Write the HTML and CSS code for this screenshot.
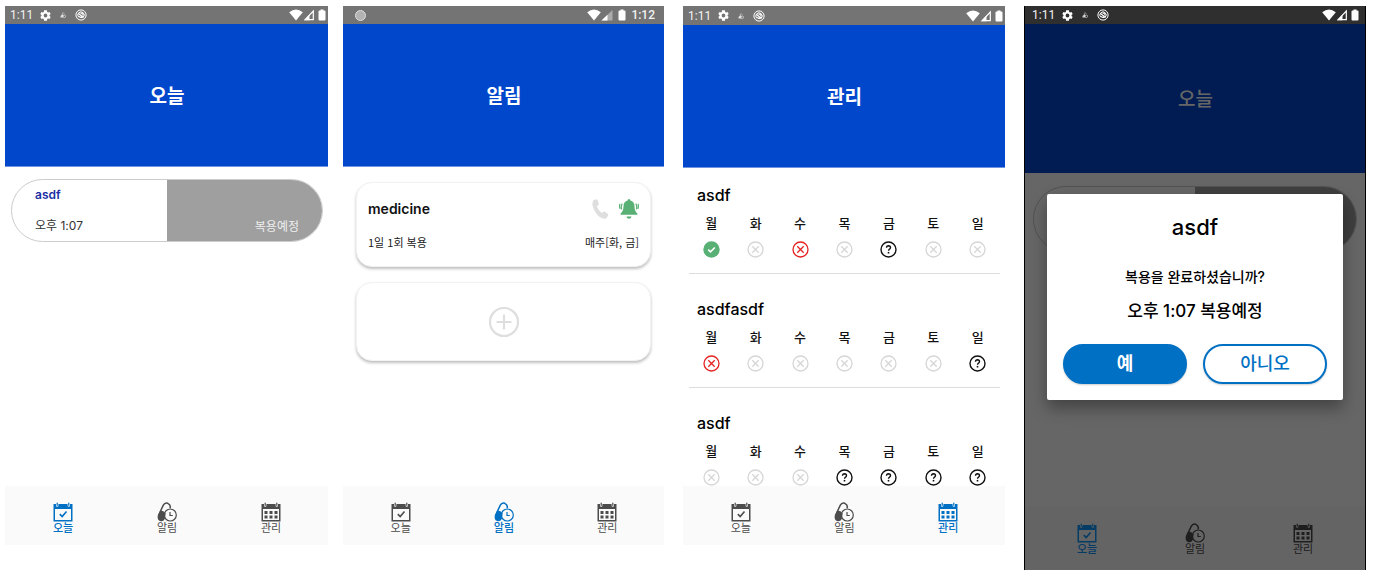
FILE: index.html
```html
<!DOCTYPE html>
<html lang="ko">
<head>
<meta charset="utf-8">
<meta name="viewport" content="width=device-width, initial-scale=1">
<title>복용 알림</title>
<link rel="stylesheet" href="styles.css">
</head>
<body>
<svg class="sprite" aria-hidden="true">
  <symbol id="gear" viewBox="0 0 24 24"><path fill="currentColor" fill-rule="evenodd" d="M19.4 13a7.500 7.500 0 0 0 0-2l2.200-1.700-2.200-3.800-2.600 1a7.500 7.500 0 0 0-1.700-1L14.700 2.500H9.300L8.900 5.500a7.500 7.500 0 0 0-1.700 1l-2.600-1-2.200 3.800L4.600 11a7.500 7.500 0 0 0 0 2l-2.200 1.700 2.200 3.800 2.600-1a7.500 7.500 0 0 0 1.700 1l.4 3h5.400l.4-3a7.500 7.500 0 0 0 1.700-1l2.600 1 2.200-3.800zM12 15.500a3.500 3.500 0 1 1 0-7 3.500 3.500 0 0 1 0 7z"/></symbol>
  <symbol id="pillmini" viewBox="0 0 8 8"><path fill="currentColor" opacity=".75" d="M1.500 6.500V5l2-2 .8 1v2.500z"/><path fill="none" stroke="currentColor" stroke-width=".7" opacity=".6" d="M3 3l1-1.500L5.500 3"/><circle cx="5.300" cy="5.300" r="1.300" fill="none" stroke="currentColor" stroke-width=".7" opacity=".7"/></symbol>
  <symbol id="swirl" viewBox="0 0 24 24"><g fill="none" stroke="currentColor"><circle cx="12" cy="12" r="10.200" stroke-width="2"/><path stroke-width="2" d="M7.500 16.500a6.300 6.300 0 1 1 9 0"/><path stroke-width="2.200" d="M7 9l10 8M8.500 14.500a4.500 4.500 0 0 0 6.500 1.500M11 8.500a4 4 0 0 1 5 4.500"/></g></symbol>
  <symbol id="wifi" viewBox="0 0 14 12"><path fill="currentColor" d="M7 11.500L.2 3.200Q7-2 13.800 3.200z"/></symbol>
  <symbol id="signal" viewBox="0 0 12 12"><path fill="none" stroke="currentColor" stroke-width="1.200" d="M2.200 10.600L10.300 2v8.600z"/><path fill="currentColor" d="M1 11.300L6.500 5.500v5.800z"/></symbol>
  <symbol id="signalpart" viewBox="0 0 12 12"><path fill="currentColor" opacity=".4" d="M.5 11.500L11.500 1v10.500z"/><path fill="currentColor" d="M.5 11.500L6.500 5.800v5.700z"/></symbol>
  <symbol id="battery" viewBox="0 0 8 12"><path fill="currentColor" d="M2.500.5h3v1h1q1 0 1 1v8q0 1-1 1h-5q-1 0-1-1v-8q0-1 1-1h1z"/></symbol>
  <symbol id="today" viewBox="0 0 20 20"><path fill="currentColor" fill-rule="evenodd" d="M.5 2H3v1.500a1.200 1.200 0 0 0 2.400 0V2h9.200v1.500a1.200 1.200 0 0 0 2.400 0V2h2.500v17.500H.5zM2 7v11h16V7z"/><path stroke="currentColor" stroke-width="1.200" stroke-linecap="round" d="M4.200 1v2.300M15.800 1v2.300"/><path fill="none" stroke="currentColor" stroke-width="1.600" d="M6.800 12.200l2.400 2.300 4.300-5"/></symbol>
  <symbol id="pill" viewBox="0 0 20 20"><path fill="currentColor" d="M3.200 8.500Q6.200 8 8.700 11.500L7.800 17Q6 20.200 3 19 .2 17.800.7 14.500z"/><path fill="none" stroke="currentColor" stroke-width="1.500" d="M1.200 14L6.300 3.200Q8 .2 10.800 1.300 14.200 3 13 6.300"/><circle cx="13.300" cy="13" r="6" fill="none" stroke="currentColor" stroke-width="1.200"/><path fill="none" stroke="currentColor" stroke-width="1.200" d="M13 10v3.500h2.800"/></symbol>
  <symbol id="calendar" viewBox="0 0 20 20"><path fill="currentColor" fill-rule="evenodd" d="M.5 2H3v1.500a1.200 1.200 0 0 0 2.400 0V2h9.200v1.500a1.200 1.200 0 0 0 2.400 0V2h2.500v17.500H.5zM2 7v11h16V7z"/><path stroke="currentColor" stroke-width="1.200" stroke-linecap="round" d="M4.200 1v2.300M15.800 1v2.300"/><path fill="currentColor" d="M3.500 9h3v3h-3zM8.500 9h3v3h-3zM13.500 9h3v3h-3zM3.500 13.500h3v3h-3zM8.500 13.500h3v3h-3zM13.500 13.500h3v3h-3z"/></symbol>
  <symbol id="phone" viewBox="0 0 20 20"><path fill="currentColor" d="M4.200.9L6.500.2q.8-.1 1.100.7l1.200 3.700q.2.800-.4 1.300L6.800 7.200Q8.300 11.400 11.800 14l2-1.300q.7-.4 1.300 0l2.900 2.300q.6.600.2 1.300l-1.400 2.400q-.7 1-2 1.100Q9.500 19.700 5.300 13 1.500 7 2.700 2.500q.3-1.200 1.500-1.600z"/></symbol>
  <symbol id="bell" viewBox="0 0 20 20"><path fill="currentColor" d="M10 0q1.400 0 1.400 1.600 4 1 4.100 5.600 0 4.800 2.900 7.300v1.300H1.600v-1.300q2.900-2.500 2.900-7.300Q4.600 2.600 8.600 1.600 8.600 0 10 0zM7.500 17.500h5q-.4 2.200-2.500 2.200t-2.500-2.200z"/><path fill="none" stroke="currentColor" stroke-width="1.200" stroke-linecap="round" d="M3 5Q1.800 7.500 2.500 10M.9 5.200q-.6 2 0 4.200M17 5q1.200 2.500.5 5M19.100 5.200q.6 2 0 4.200"/></symbol>
  <symbol id="plus" viewBox="0 0 32 32"><circle cx="16" cy="16" r="14" fill="none" stroke="currentColor" stroke-width="2.200"/><path stroke="currentColor" stroke-width="2.200" d="M8.500 16h15M16 8.500v15"/></symbol>
  <symbol id="miss" viewBox="0 0 17 17"><g fill="none" stroke="currentColor" stroke-width="1.300"><circle cx="8.500" cy="8.500" r="7.500"/><path d="M5.300 5.300l6.400 6.400M11.700 5.300l-6.400 6.400"/></g></symbol>
  <symbol id="done" viewBox="0 0 17 17"><circle cx="8.500" cy="8.500" r="8.200" fill="currentColor"/><path fill="none" stroke="#fff" stroke-width="1.700" d="M5.200 8.600l2.300 2.200 4.300-4.300"/></symbol>
  <symbol id="ask" viewBox="0 0 17 17"><g fill="none" stroke="currentColor" stroke-width="1.400"><circle cx="8.500" cy="8.500" r="7.500"/><path d="M6.500 6.700q.1-1.900 2-1.900 2 .1 2 1.800 0 1-1 1.600-.9.500-1 1.600"/><path stroke-width="1.600" d="M8.500 10.900v1.600"/></g></symbol>
</svg>

<main class="gallery">
  <section class="phone phone-today">
    <div class="status">
      <span class="clock">1:11</span><svg class="s-gear"><use href="#gear"/></svg><svg class="s-mini"><use href="#pillmini"/></svg><svg class="s-swirl"><use href="#swirl"/></svg>
      <span class="status-right"><svg class="s-wifi"><use href="#wifi"/></svg><svg class="s-signal"><use href="#signal"/></svg><svg class="s-battery"><use href="#battery"/></svg></span>
    </div>
    <header class="hero"><h1>오늘</h1></header>
    <div class="body">
      <article class="dose">
        <div class="dose-info"><h2>asdf</h2><p>오후 1:07</p></div>
        <div class="dose-state">복용예정</div>
      </article>
    </div>
    <nav class="tabs">
      <a class="active" href="#"><svg><use href="#today"/></svg>오늘</a>
      <a href="#"><svg><use href="#pill"/></svg>알림</a>
      <a href="#"><svg><use href="#calendar"/></svg>관리</a>
    </nav>
  </section>

  <section class="phone phone-alarm">
    <div class="status">
      <span class="record"></span>
      <span class="status-right"><svg class="s-wifi"><use href="#wifi"/></svg><svg class="s-signal"><use href="#signalpart"/></svg><svg class="s-battery"><use href="#battery"/></svg><span class="clock strong">1:12</span></span>
    </div>
    <header class="hero"><h1>알림</h1></header>
    <div class="body alarms">
      <article class="card alarm">
        <div class="row">
          <h2>medicine</h2>
          <div class="actions">
            <button type="button" class="icon-btn" aria-label="전화"><svg><use href="#phone"/></svg></button>
            <button type="button" class="icon-btn on" aria-label="알림 켜짐"><svg><use href="#bell"/></svg></button>
          </div>
        </div>
        <div class="row small"><span>1일 1회 복용</span><span>매주[화, 금]</span></div>
      </article>
      <button type="button" class="card add" aria-label="추가"><svg><use href="#plus"/></svg></button>
    </div>
    <nav class="tabs">
      <a href="#"><svg><use href="#today"/></svg>오늘</a>
      <a class="active" href="#"><svg><use href="#pill"/></svg>알림</a>
      <a href="#"><svg><use href="#calendar"/></svg>관리</a>
    </nav>
  </section>

  <section class="phone phone-manage">
    <div class="status">
      <span class="clock">1:11</span><svg class="s-gear"><use href="#gear"/></svg><svg class="s-mini"><use href="#pillmini"/></svg><svg class="s-swirl"><use href="#swirl"/></svg>
      <span class="status-right"><svg class="s-wifi"><use href="#wifi"/></svg><svg class="s-signal"><use href="#signal"/></svg><svg class="s-battery"><use href="#battery"/></svg></span>
    </div>
    <header class="hero"><h1>관리</h1></header>
    <div class="body weeks">
      <table class="week">
        <caption>asdf</caption>
        <thead><tr><th>월</th><th>화</th><th>수</th><th>목</th><th>금</th><th>토</th><th>일</th></tr></thead>
        <tbody><tr><td class="done"><svg><use href="#done"/></svg></td><td><svg><use href="#miss"/></svg></td><td class="missed"><svg><use href="#miss"/></svg></td><td><svg><use href="#miss"/></svg></td><td class="ask"><svg><use href="#ask"/></svg></td><td><svg><use href="#miss"/></svg></td><td><svg><use href="#miss"/></svg></td></tr></tbody>
      </table>
      <table class="week">
        <caption>asdfasdf</caption>
        <thead><tr><th>월</th><th>화</th><th>수</th><th>목</th><th>금</th><th>토</th><th>일</th></tr></thead>
        <tbody><tr><td class="missed"><svg><use href="#miss"/></svg></td><td><svg><use href="#miss"/></svg></td><td><svg><use href="#miss"/></svg></td><td><svg><use href="#miss"/></svg></td><td><svg><use href="#miss"/></svg></td><td><svg><use href="#miss"/></svg></td><td class="ask"><svg><use href="#ask"/></svg></td></tr></tbody>
      </table>
      <table class="week">
        <caption>asdf</caption>
        <thead><tr><th>월</th><th>화</th><th>수</th><th>목</th><th>금</th><th>토</th><th>일</th></tr></thead>
        <tbody><tr><td><svg><use href="#miss"/></svg></td><td><svg><use href="#miss"/></svg></td><td><svg><use href="#miss"/></svg></td><td class="ask"><svg><use href="#ask"/></svg></td><td class="ask"><svg><use href="#ask"/></svg></td><td class="ask"><svg><use href="#ask"/></svg></td><td class="ask"><svg><use href="#ask"/></svg></td></tr></tbody>
      </table>
    </div>
    <nav class="tabs">
      <a href="#"><svg><use href="#today"/></svg>오늘</a>
      <a href="#"><svg><use href="#pill"/></svg>알림</a>
      <a class="active" href="#"><svg><use href="#calendar"/></svg>관리</a>
    </nav>
  </section>

  <section class="phone phone-dialog">
    <div class="status">
      <span class="clock">1:11</span><svg class="s-gear"><use href="#gear"/></svg><svg class="s-mini"><use href="#pillmini"/></svg><svg class="s-swirl"><use href="#swirl"/></svg>
      <span class="status-right"><svg class="s-wifi"><use href="#wifi"/></svg><svg class="s-signal"><use href="#signal"/></svg><svg class="s-battery"><use href="#battery"/></svg></span>
    </div>
    <div class="screen">
      <header class="hero"><h1>오늘</h1></header>
      <div class="body">
        <article class="dose">
          <div class="dose-info"></div>
          <div class="dose-state"></div>
        </article>
      </div>
      <nav class="tabs">
        <a class="active" href="#"><svg><use href="#today"/></svg>오늘</a>
        <a href="#"><svg><use href="#pill"/></svg>알림</a>
        <a href="#"><svg><use href="#calendar"/></svg>관리</a>
      </nav>
      <div class="scrim">
        <div class="dialog" role="dialog" aria-labelledby="dialog-title">
          <h2 id="dialog-title">asdf</h2>
          <p class="question">복용을 완료하셨습니까?</p>
          <p class="when">오후 1:07 복용예정</p>
          <div class="choices">
            <button type="button" class="yes">예</button>
            <button type="button" class="no">아니오</button>
          </div>
        </div>
      </div>
    </div>
  </section>
</main>
</body>
</html>
```
FILE: styles.css
```css
* { box-sizing: border-box; }

body {
  margin: 0;
  background: #fff;
  color: #111;
  font-family: Inter, "Noto Sans CJK KR", sans-serif;
}

h1, h2, p { margin: 0; }
button { font: inherit; cursor: pointer; }
svg { display: block; flex: none; }
.sprite { position: absolute; width: 0; height: 0; }

.gallery {
  display: flex;
  align-items: flex-start;
  min-height: 100vh;
  padding: 6px 7px 7px 5px;
}

.phone {
  display: flex;
  flex-direction: column;
  height: calc(100vh - 38px);
  min-width: 0;
  overflow: hidden;
}
.phone-today { flex: 323 1 0; }
.phone-alarm { flex: 321 1 0; margin-left: 15px; }
.phone-manage { flex: 322 1 0; margin-left: 19px; }
.phone-dialog {
  flex: 340 1 0;
  height: calc(100vh - 13px);
  margin-left: 19px;
  border: solid #000;
  border-width: 0 1px;
}

/* status bar */
.status {
  display: flex;
  align-items: center;
  flex: none;
  height: 18px;
  padding: 0 2px 0 5px;
  background: #747474;
  color: #fff;
}
.phone-manage .status { height: 19px; }
.phone-dialog .status { padding: 0 6px 0 7px; background: #2f2f2f; }
.phone-alarm .status { padding: 0 9px 0 12px; }
.clock { font: 12px/16px Roboto, sans-serif; color: #f2f2f2; }
.clock.strong { margin-left: 5px; font-weight: 500; }
.s-gear { width: 13px; height: 13px; margin-left: 6px; }
.s-mini { width: 8px; height: 8px; margin-left: 7px; }
.s-swirl { width: 12px; height: 12px; margin-left: 8px; }
.status-right { display: flex; align-items: center; margin-left: auto; }
.s-wifi { width: 14px; height: 12px; }
.s-signal { width: 12px; height: 12px; }
.s-battery { width: 8px; height: 12px; margin-left: 3px; }
.phone-alarm .s-battery { margin-left: 5px; }
.record {
  width: 11px;
  height: 11px;
  border: 1px solid #dedede;
  border-radius: 50%;
  background: #b3b3b3;
}

/* title area */
.hero {
  display: flex;
  align-items: center;
  justify-content: center;
  flex: none;
  height: 143px;
  padding: 3px 0 0 1px;
  border-bottom: 1px solid #6f94e0;
  background: #0047cc;
  color: #fff;
}
.hero h1 { font-size: 19px; line-height: 28px; font-weight: 700; }
.phone-dialog .hero { height: 149px; border-bottom: 0; }
.phone-dialog .hero h1 { font-weight: 500; }

.body { flex: 1; min-height: 0; overflow: hidden; padding: 12px 5px 0 6px; }

/* today */
.dose {
  display: flex;
  height: 63px;
  overflow: hidden;
  border: 1px solid #ccc;
  border-radius: 32px;
  background: #fff;
}
.dose-info {
  display: flex;
  flex-direction: column;
  justify-content: space-between;
  flex: 1;
  padding: 5px 0 5px 23px;
}
.dose-info h2 { font-size: 12px; line-height: 20px; font-weight: 600; color: #1c2fa5; }
.dose-info p { font-size: 12px; line-height: 20px; color: #333; }
.dose-state {
  display: flex;
  align-items: flex-end;
  justify-content: flex-end;
  flex: 1;
  margin: -1px;
  padding: 0 24px 5px 0;
  background: #9f9f9f;
  color: #eee;
  font-size: 12px;
  line-height: 20px;
}
.phone-dialog .body { padding: 13px 8px 0; }
.phone-dialog .dose { height: 66px; border-radius: 33px; }

/* alarms */
.alarms { display: flex; flex-direction: column; gap: 15px; padding: 15px 13px 0; }
.card {
  border: 1px solid #f2f2f2;
  border-radius: 16px;
  background: #fff;
  box-shadow: 0 2px 3px rgba(0, 0, 0, .25);
}
.alarm { display: flex; flex-direction: column; gap: 11px; height: 85px; padding: 14px 11px; }
.row { display: flex; align-items: center; justify-content: space-between; }
.row h2 { font-size: 14px; line-height: 24px; font-weight: 600; }
.actions { display: flex; gap: 9px; }
.icon-btn { padding: 0; border: 0; background: none; color: #dedede; }
.icon-btn svg { width: 20px; height: 20px; }
.icon-btn.on { color: #58b075; }
.small { font: 11px/20px "Noto Sans CJK KR", sans-serif; color: #222; }
.add { display: grid; place-items: center; height: 79px; padding: 0; color: #dedede; }
.add svg { width: 32px; height: 32px; }

/* weekly history */
.weeks { padding: 0 5px 0 6px; }
.week {
  width: 100%;
  table-layout: fixed;
  border-collapse: collapse;
  border-bottom: 1px solid #ddd;
}
.week caption { padding: 23px 8px 6px; font-size: 16px; line-height: 24px; font-weight: 500; text-align: left; color: #000; }
.week:first-child caption { padding-top: 15px; }
.week th { padding: 0; font-size: 13px; line-height: 20px; font-weight: 500; }
.week td { padding: 8px 0 15px; color: #d6d6d6; }
.week svg { width: 17px; height: 17px; margin: 0 auto; }
.week .done { color: #58b075; }
.week .missed { color: #e52222; }
.week .ask { color: #111; }

/* bottom tabs */
.tabs {
  display: grid;
  grid-template-columns: repeat(3, 1fr);
  flex: none;
  height: 59px;
  padding: 16px 5px 0 6px;
  background: #fafafa;
}
.tabs a {
  display: flex;
  flex-direction: column;
  align-items: center;
  color: #4c4c4c;
  font-size: 11px;
  line-height: 12px;
  text-decoration: none;
}
.tabs svg { width: 20px; height: 20px; }
.tabs .active { color: #0070c4; font-weight: 500; }
.phone-dialog .tabs { height: 64px; padding: 17px 8px 0; }
.phone-dialog .tabs .active { color: #0d96ff; }

/* confirm dialog */
.screen { position: relative; display: flex; flex-direction: column; flex: 1; min-height: 0; }
.scrim {
  position: absolute;
  inset: 0;
  display: flex;
  align-items: center;
  padding: 0 22px;
  background: rgba(0, 0, 0, .6);
}
.dialog {
  flex: 1;
  padding: 17px 16px 16px;
  border-radius: 2px;
  background: #fff;
  color: #000;
  text-align: center;
  box-shadow: 0 8px 16px rgba(0, 0, 0, .35);
}
.dialog h2 { font-size: 22px; line-height: 32px; font-weight: 500; }
.question { margin-top: 22px; font-size: 14px; line-height: 24px; font-weight: 500; }
.when { margin-top: 10px; font-size: 17px; line-height: 24px; font-weight: 500; }
.choices { display: grid; grid-template-columns: 1fr 1fr; gap: 16px; margin-top: 21px; }
.choices button {
  height: 40px;
  padding: 0;
  border: 2px solid #0070c4;
  border-radius: 20px;
  font-size: 18px;
  line-height: 28px;
  font-weight: 500;
  box-shadow: 0 1px 2px rgba(0, 0, 0, .2);
}
.choices .yes { background: #0070c4; color: #fff; font-weight: 700; }
.choices .no { background: #fff; color: #0070c4; }
```
